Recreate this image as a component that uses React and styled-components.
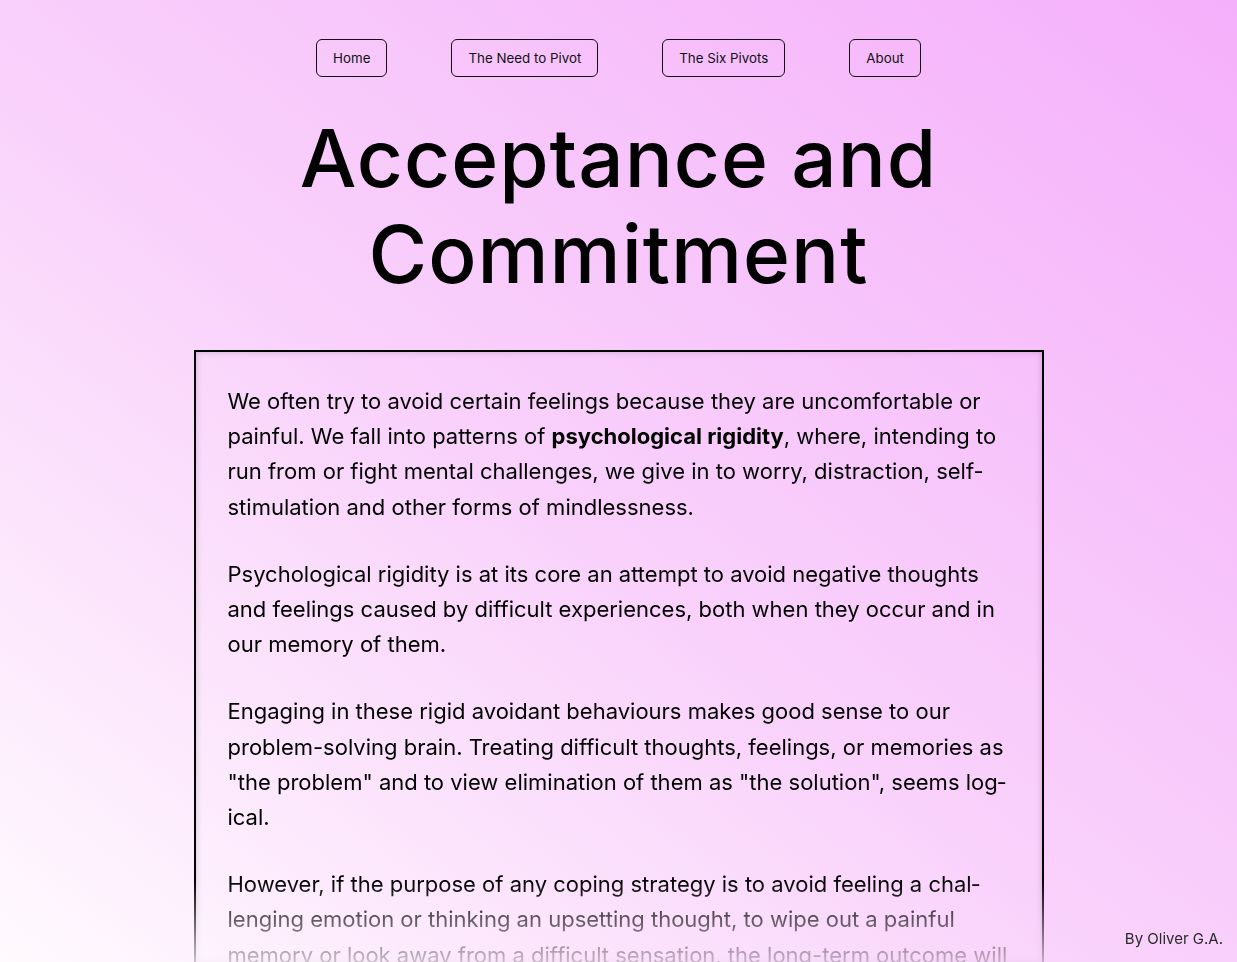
import React from "react";
import styled, { createGlobalStyle } from "styled-components";

const Global = createGlobalStyle`
  html, body { margin: 0; padding: 0; height: 100%; }
  body {
    font-family: Inter, "Noto Sans", sans-serif;
    color: #000;
    background: linear-gradient(to top right, #fffafe 0%, #f9d2fb 45%, #f5b0fb 100%);
    background-attachment: fixed;
    min-height: 100vh;
    overflow: hidden;
  }
`;

const Page = styled.div`
  height: 100vh;
  display: flex;
  flex-direction: column;
  align-items: center;
  box-sizing: border-box;
  padding-top: 39px;
`;

const Nav = styled.nav`
  display: flex;
  gap: 64px;
  justify-content: center;
`;

const NavButton = styled.a`
  display: inline-flex;
  align-items: center;
  height: 38px;
  box-sizing: border-box;
  padding: 0 16px;
  border: 1px solid #111;
  border-radius: 6px;
  font-size: 13.33px;
  color: #111;
  text-decoration: none;
  cursor: pointer;
`;

const Title = styled.h1`
  margin: 33px 0 48px;
  font-size: 80px;
  font-weight: 500;
  line-height: 1.2;
  text-align: center;
  max-width: 720px;
  letter-spacing: 1px;
`;

const Card = styled.main`
  flex: 1;
  width: 850px;
  box-sizing: border-box;
  border: 2px solid #000;
  border-bottom: none;
  box-shadow: inset 0 0 7px rgba(0, 0, 0, 0.18);
  padding: 32px 32px 0;
  overflow: hidden;
  -webkit-mask-image: linear-gradient(to bottom, #000 calc(100% - 82px), rgba(0,0,0,0.2) 100%);
  mask-image: linear-gradient(to bottom, #000 calc(100% - 82px), rgba(0,0,0,0.2) 100%);
`;

const Para = styled.p`
  margin: 0 0 32px;
  font-size: 22px;
  line-height: 35.2px;
  hyphens: manual;
`;

const Credit = styled.div`
  position: fixed;
  right: 14px;
  bottom: 14px;
  font-size: 15px;
  color: #2a2a2a;
`;

export default function App() {
  const links = ["Home", "The Need to Pivot", "The Six Pivots", "About"];
  return (
    <>
      <Global />
      <Page lang="en">
        <Nav>
          {links.map((l) => (
            <NavButton key={l}>{l}</NavButton>
          ))}
        </Nav>
        <Title>Acceptance and Commitment</Title>
        <Card>
          <Para>
            We often try to avoid certain feelings because they are uncomfortable or
            painful. We fall into patterns of <b>psychological rigidity</b>, where, intending
            to run from or fight mental challenges, we give in to worry, distraction,
            self-stimulation and other forms of mindlessness.
          </Para>
          <Para>
            Psychological rigidity is at its core an attempt to avoid negative thoughts
            and feelings caused by difficult experiences, both when they occur and in our
            memory of them.
          </Para>
          <Para>
            Engaging in these rigid avoidant behaviours makes good sense to our
            problem-solving brain. Treating difficult thoughts, feelings, or memories as
            "the problem" and to view elimination of them as "the solution", seems
            log{"\u00AD"}ical.
          </Para>
          <Para>
            However, if the purpose of any coping strategy is to avoid feeling a
            chal{"\u00AD"}lenging emotion or thinking an upsetting thought, to wipe out a
            painful memory or look away from a difficult sensation, the long-term outcome
            will often be the opposite of what we intended.
          </Para>
        </Card>
      </Page>
      <Credit>By Oliver G.A.</Credit>
    </>
  );
}
